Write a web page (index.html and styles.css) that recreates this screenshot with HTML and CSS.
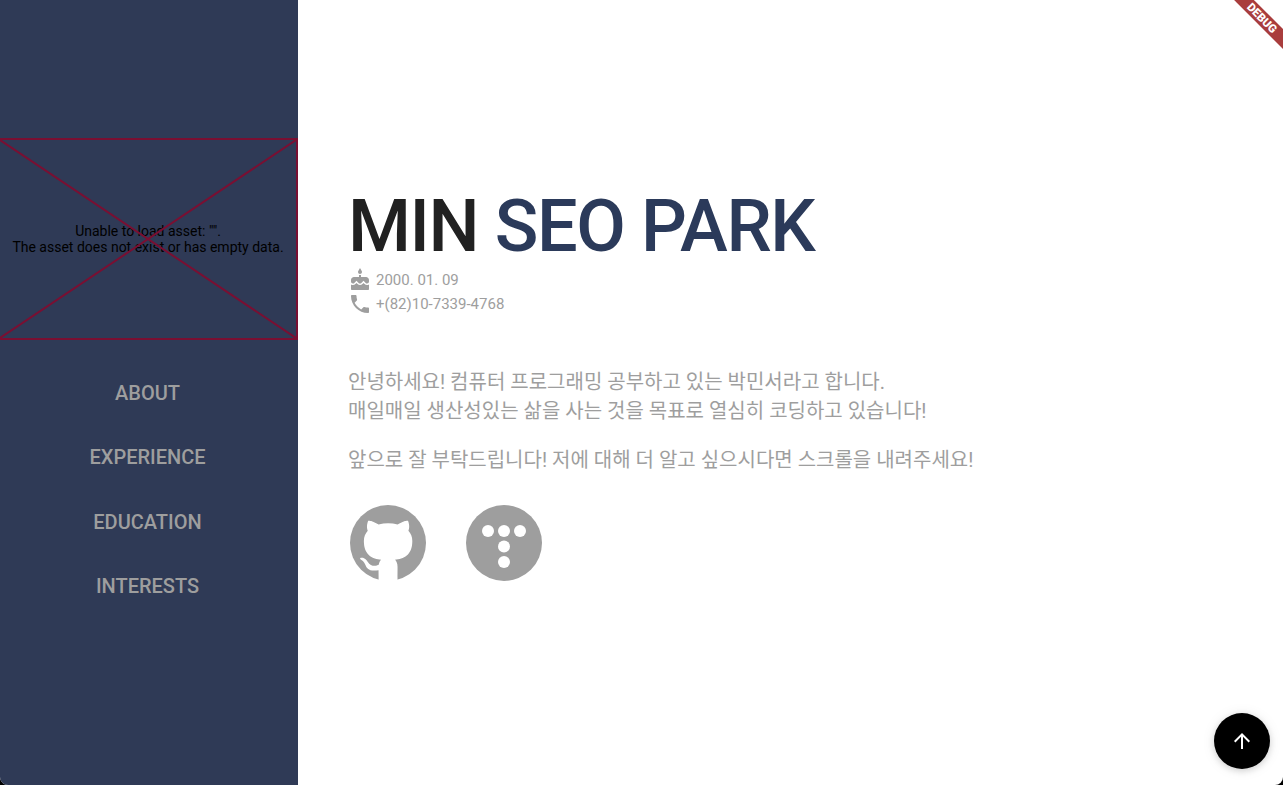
FILE: index.html
```html
<!DOCTYPE html>
<html lang="ko">
<head>
    <meta charset="UTF-8">
    <meta name="viewport" content="width=device-width, initial-scale=1.0">
    <title>Min Seo Park</title>
    <link rel="stylesheet" href="styles.css">
</head>
<body>
    <div class="app">
        <aside class="sidebar">
            <div class="asset-error">
                <p>Unable to load asset: "".<br>The asset does not exist or has empty data.</p>
                <svg class="asset-cross" viewBox="0 0 298 202" preserveAspectRatio="none">
                    <path d="M0 0L298 202M298 0L0 202"/>
                </svg>
            </div>
            <nav class="nav">
                <a href="#about">ABOUT</a>
                <a href="#experience">EXPERIENCE</a>
                <a href="#education">EDUCATION</a>
                <a href="#interests">INTERESTS</a>
            </nav>
        </aside>

        <main class="main">
            <h1 class="name">MIN <span>SEO PARK</span></h1>

            <div class="info-row">
                <svg class="info-icon" viewBox="0 0 24 24"><path d="M12 6c1.11 0 2-.9 2-2 0-.38-.1-.73-.29-1.03L12 0l-1.71 2.97c-.19.3-.29.65-.29 1.03 0 1.1.9 2 2 2zm4.6 9.99l-1.07-1.07-1.08 1.07c-1.3 1.3-3.58 1.31-4.89 0l-1.07-1.07-1.09 1.07C6.75 16.64 5.88 17 4.96 17c-.73 0-1.4-.23-1.96-.61V21c0 .55.45 1 1 1h16c.55 0 1-.45 1-1v-4.61c-.56.38-1.23.61-1.96.61-.92 0-1.79-.36-2.44-1.01zM18 9h-5V7h-2v2H6c-1.66 0-3 1.34-3 3v1.54c0 1.08.88 1.96 1.96 1.96.52 0 1.02-.2 1.38-.57l2.14-2.13 2.13 2.13c.74.74 2.03.74 2.77 0l2.14-2.13 2.13 2.13c.37.37.86.57 1.38.57 1.08 0 1.96-.88 1.96-1.96V12C21 10.34 19.66 9 18 9z"/></svg>
                <span>2000. 01. 09</span>
            </div>
            <div class="info-row">
                <svg class="info-icon" viewBox="0 0 24 24"><path d="M6.62 10.79c1.44 2.83 3.76 5.14 6.59 6.59l2.2-2.2c.27-.27.67-.36 1.02-.24 1.12.37 2.33.57 3.57.57.55 0 1 .45 1 1V20c0 .55-.45 1-1 1-9.39 0-17-7.61-17-17 0-.55.45-1 1-1h3.5c.55 0 1 .45 1 1 0 1.25.2 2.45.57 3.57.11.35.03.74-.25 1.02l-2.2 2.2z"/></svg>
                <span>+(82)10-7339-4768</span>
            </div>

            <div class="intro">
                <p>안녕하세요! 컴퓨터 프로그래밍 공부하고 있는 박민서라고 합니다.<br>매일매일 생산성있는 삶을 사는 것을 목표로 열심히 코딩하고 있습니다!</p>
                <p>앞으로 잘 부탁드립니다! 저에 대해 더 알고 싶으시다면 스크롤을 내려주세요!</p>
            </div>

            <div class="links">
                <svg class="link-icon" viewBox="0 0 16 16">
                    <circle cx="8" cy="8" r="8" fill="#9e9e9e"/>
                    <path fill="#fff" d="M6.02 16V15.21c0-.19-.01-.82-.01-1.49-2.01.37-2.53-.49-2.69-.94-.09-.23-.48-.94-.82-1.13-.28-.15-.68-.52-.01-.53.63-.01 1.08.58 1.23.82.72 1.21 1.87.87 2.33.66.07-.52.28-.87.51-1.07-1.78-.2-3.64-.89-3.64-3.95 0-.87.31-1.59.82-2.15-.08-.2-.36-1.02.08-2.12 0 0 .67-.21 2.2.82.64-.18 1.32-.27 2-.27.68 0 1.36.09 2 .27 1.53-1.04 2.2-.82 2.2-.82.44 1.1.16 1.92.08 2.12.51.56.82 1.27.82 2.15 0 3.07-1.87 3.75-3.65 3.95.29.25.54.73.54 1.48 0 1.07-.01 1.93-.01 2.2V16z"/>
                </svg>
                <svg class="link-icon" viewBox="0 0 76 76">
                    <circle cx="38" cy="38" r="38" fill="#9e9e9e"/>
                    <g fill="#fff">
                        <circle cx="22" cy="26" r="6"/>
                        <circle cx="38" cy="26" r="6"/>
                        <circle cx="54" cy="26" r="6"/>
                        <circle cx="38" cy="41.500" r="6"/>
                        <circle cx="38" cy="57" r="6"/>
                    </g>
                </svg>
            </div>
        </main>

        <button class="fab">
            <svg viewBox="0 0 24 24"><path d="M4 12l1.41 1.41L11 7.83V20h2V7.830l5.58 5.59L20 12l-8-8-8 8z"/></svg>
        </button>
        <div class="debug-banner"><span>DEBUG</span></div>
    </div>
</body>
</html>
```

FILE: styles.css
```css
html, body {
    margin: 0;
    height: 100%;
    background-color: #000;
    overflow: hidden;
}
.app {
    position: relative;
    display: flex;
    height: 785px;
    overflow: hidden;
    border-radius: 0 0 8px 8px;
    background-color: #fff;
    font-family: Roboto, "Noto Sans CJK KR", sans-serif;
}

/* left column */
.sidebar {
    flex: 0 0 298px;
    padding-top: 138px;
    box-sizing: border-box;
    background-color: #2f3a56;
}
.asset-error {
    position: relative;
    display: flex;
    align-items: center;
    justify-content: center;
    height: 202px;
    box-sizing: border-box;
    border: 2px solid #7a0f32;
    border-left: 0;
}
.asset-error p {
    margin: 0;
    font-size: 14px;
    line-height: 16px;
    text-align: center;
    color: #000;
}
.asset-cross {
    position: absolute;
    top: 0;
    left: 0;
    width: 100%;
    height: 100%;
}
.asset-cross path {
    fill: none;
    stroke: #7a0f32;
    stroke-width: 2;
}
.nav {
    display: flex;
    flex-direction: column;
    padding: 20.5px 3px 0 0;
}
.nav a {
    height: 64.67px;
    line-height: 64.67px;
    text-align: center;
    font-size: 20px;
    font-weight: 500;
    color: #9e9e9e;
    text-decoration: none;
}

/* right column */
.main {
    flex: 1;
    padding: 189px 0 0 50px;
}
.name {
    margin: 0 0 3px;
    font-size: 72px;
    line-height: 76px;
    font-weight: 500;
    letter-spacing: -1.4px;
    color: #212121;
}
.name span {
    color: #2b3a5a;
}
.info-row {
    display: flex;
    align-items: center;
    gap: 4px;
    height: 24px;
    font-size: 15px;
    color: #9e9e9e;
}
.info-icon {
    width: 24px;
    height: 24px;
    fill: #9e9e9e;
}
.intro {
    margin-top: 52px;
    font-size: 20px;
    line-height: 29px;
    color: #9e9e9e;
}
.intro p {
    margin: 0 0 20px;
}
.links {
    display: flex;
    gap: 40px;
    margin-top: 30px;
    padding-left: 2px;
}
.link-icon {
    width: 76px;
    height: 76px;
}

/* overlays */
.fab {
    position: absolute;
    right: 13px;
    bottom: 16px;
    display: flex;
    align-items: center;
    justify-content: center;
    width: 56px;
    height: 56px;
    padding: 0;
    border: none;
    border-radius: 50%;
    background-color: #000;
    box-shadow: 0 2px 6px rgba(0, 0, 0, 0.14), 0 1px 14px rgba(0, 0, 0, 0.08);
}
.fab svg {
    width: 24px;
    height: 24px;
    fill: #fff;
}
.debug-banner {
    position: absolute;
    top: 11px;
    right: -39px;
    display: flex;
    align-items: center;
    justify-content: center;
    width: 120px;
    height: 14px;
    font-size: 11.500px;
    font-weight: 900;
    color: #fff;
    background-color: rgba(160, 40, 40, 0.9);
    transform: rotate(45deg);
}
```
